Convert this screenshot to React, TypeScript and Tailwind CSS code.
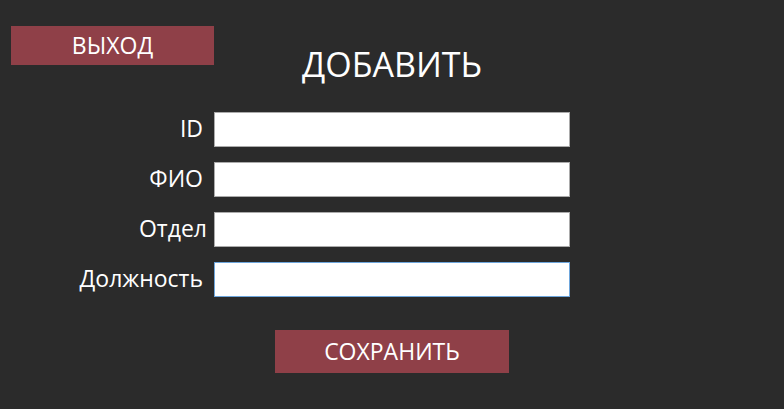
const fields = [
  { label: "ID", pad: "pr-[11px]" },
  { label: "ФИО", pad: "pr-[11px]" },
  { label: "Отдел", pad: "pr-[7px]" },
  { label: "Должность", pad: "pr-[11px]" },
];

export default function App() {
  return (
    <div className="h-[409px] w-[784px] bg-[#2b2b2b] text-white font-['Open_Sans',sans-serif]">
      <div className="grid grid-cols-[1fr_auto_1fr] items-start">
        <button
          type="button"
          className="ml-[11px] mt-[26px] h-[39px] w-[203px] bg-[#8f4048] text-[23px] leading-none text-white"
        >
          ВЫХОД
        </button>
        <h1 className="mt-[44px] text-[34px] leading-[40px] font-normal">ДОБАВИТЬ</h1>
        <div />
      </div>

      <div className="mt-[28px] flex flex-col gap-[15px]">
        {fields.map((field, i) => (
          <div key={field.label} className="flex items-center">
            <span className={`w-[214px] ${field.pad} pb-[2px] text-right text-[23px] leading-none`}>
              {field.label}
            </span>
            <input
              type="text"
              className={`h-[35px] w-[356px] border bg-white px-1 text-black outline-none ${
                i === fields.length - 1 ? "border-[#6ea6dc]" : "border-[#ababab]"
              }`}
            />
          </div>
        ))}
      </div>

      <div className="mt-[33px] flex justify-center">
        <button
          type="button"
          className="h-[43px] w-[234px] bg-[#8f4048] text-[23px] leading-none text-white"
        >
          СОХРАНИТЬ
        </button>
      </div>
    </div>
  );
}
